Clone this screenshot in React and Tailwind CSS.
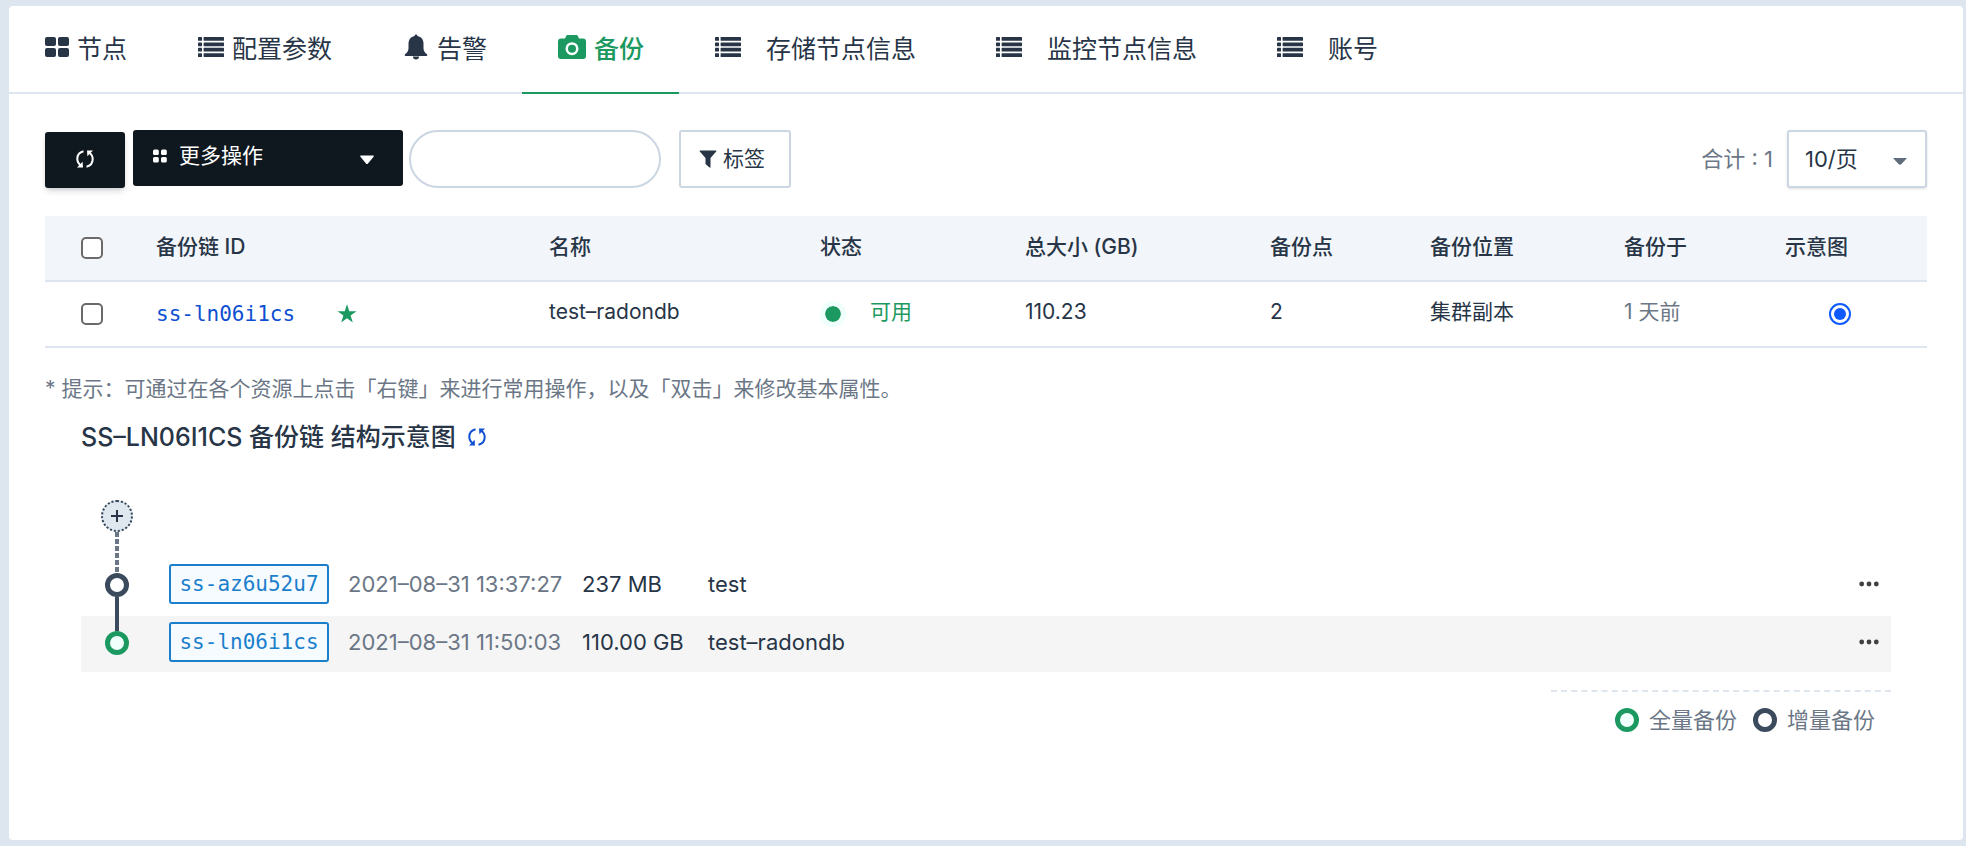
import { useState } from "react";

const GridIcon = () => (
  <svg width="24" height="20" viewBox="0 0 24 20" fill="currentColor" aria-hidden="true">
    <rect x="0" y="0" width="11" height="9" rx="2" />
    <rect x="13" y="0" width="11" height="9" rx="2" />
    <rect x="0" y="11" width="11" height="9" rx="2" />
    <rect x="13" y="11" width="11" height="9" rx="2" />
  </svg>
);

const ListIcon = () => (
  <svg width="26" height="20" viewBox="0 0 26 20" fill="currentColor" aria-hidden="true">
    {[0, 5.4, 10.8, 16.2].map((y) => (
      <g key={y}>
        <rect x="0" y={y} width="4" height="3.8" rx="0.6" />
        <rect x="5.6" y={y} width="20.4" height="3.8" rx="0.6" />
      </g>
    ))}
  </svg>
);

const BellIcon = () => (
  <svg width="26" height="26" viewBox="0 0 26 26" fill="currentColor" aria-hidden="true">
    <path d="M13 .5c.8 0 1.400.6 1.500 1.500 4 .9 6 3.900 6 7.800v4.500c0 2.600 1.300 4.400 3.200 5.800.8.600 1 1.900-.4 1.900H2.700c-1.400 0-1.200-1.300-.4-1.900 1.900-1.400 3.200-3.200 3.200-5.800V9.800c0-3.900 2-6.900 6-7.800.1-.9.7-1.500 1.500-1.500z" />
    <path d="M9.800 22.600h6.400c-.2 1.800-1.500 3-3.200 3s-3-1.200-3.200-3z" />
  </svg>
);

const CameraIcon = () => (
  <svg width="28" height="24" viewBox="0 0 28 24" fill="currentColor" aria-hidden="true">
    <path
      fillRule="evenodd"
      d="M9.800 0h8.400c.8 0 1.500.5 1.800 1.200L21 3.500h4A3 3 0 0 1 28 6.500V21a3 3 0 0 1-3 3H3a3 3 0 0 1-3-3V6.500A3 3 0 0 1 3 3.500h4l1-2.300C8.300.5 9 0 9.800 0zM14 7.200a6.500 6.500 0 1 0 0 13 6.500 6.500 0 0 0 0-13zm0 2.500a4 4 0 1 1 0 8 4 4 0 0 1 0-8z"
    />
  </svg>
);

const RefreshIcon = () => (
  <svg width="18" height="18" viewBox="0 0 18 18" fill="none" aria-hidden="true">
    <path d="M7.500 1.300C3.500 2.200 1.300 5.500 1.300 9c0 2.600 1.300 4.800 3.700 6.500" stroke="currentColor" strokeWidth="2" />
    <path d="M10.500 16.700c4-.9 6.200-4.200 6.200-7.700 0-2.600-1.300-4.800-3.700-6.500" stroke="currentColor" strokeWidth="2" />
    <path d="M1 17.600h6l-.4-5.800z" fill="currentColor" />
    <path d="M17 .4h-6l.4 5.800z" fill="currentColor" />
  </svg>
);

const DotsGridIcon = () => (
  <svg width="14" height="14" viewBox="0 0 14 14" fill="currentColor" aria-hidden="true">
    <rect x="0" y="0.500" width="5.800" height="5.500" rx="1.500" />
    <rect x="8" y="0.500" width="5.800" height="5.500" rx="1.500" />
    <rect x="0" y="8" width="5.800" height="5.500" rx="1.500" />
    <rect x="8" y="8" width="5.800" height="5.500" rx="1.500" />
  </svg>
);

const FilterIcon = () => (
  <svg width="18" height="18" viewBox="0 0 18 18" fill="currentColor" aria-hidden="true">
    <path d="M1.200.5h15.600c.6 0 .8.700.4 1.100L11.500 8v9.200c0 .5-.5.700-.9.400L7 14.500c-.3-.3-.5-.6-.5-1V8L.8 1.600C.4 1.200.600.500 1.200.5z" />
  </svg>
);

const StarIcon = () => (
  <svg width="20" height="20" viewBox="0 0 20 20" fill="currentColor" aria-hidden="true">
    <path d="M10 .3l2.300 7h7.200l-5.900 4.200 2.200 7L10 14.200l-5.800 4.300 2.200-7L.5 7.300h7.200z" />
  </svg>
);

const MoreIcon = () => (
  <svg width="20" height="6" viewBox="0 0 20 6" fill="currentColor" aria-hidden="true">
    <circle cx="2.700" cy="3" r="2.400" />
    <circle cx="10" cy="3" r="2.400" />
    <circle cx="17.300" cy="3" r="2.400" />
  </svg>
);

const PlusIcon = () => (
  <svg width="14" height="14" viewBox="0 0 14 14" stroke="currentColor" strokeWidth="2" aria-hidden="true">
    <path d="M7 1v12M1 7h12" />
  </svg>
);

const tabs = [
  { label: "节点", icon: GridIcon },
  { label: "配置参数", icon: ListIcon },
  { label: "告警", icon: BellIcon },
  { label: "备份", icon: CameraIcon },
  { label: "存储节点信息", icon: ListIcon, wide: true },
  { label: "监控节点信息", icon: ListIcon, wide: true },
  { label: "账号", icon: ListIcon, wide: true },
];

const points = [
  { id: "ss-az6u52u7", time: "2021–08–31 13:37:27", size: "237 MB", name: "test", full: false },
  { id: "ss-ln06i1cs", time: "2021–08–31 11:50:03", size: "110.00 GB", name: "test–radondb", full: true },
];

const Tabs = () => {
  const [active, setActive] = useState("备份");

  return (
    <nav className="flex border-b-2 border-[#dde6ee]">
      {tabs.map(({ label, icon: Icon, wide }) => (
        <button
          key={label}
          type="button"
          onClick={() => setActive(label)}
          className={`-mb-0.5 flex h-22 shrink-0 items-center border-b-2 pl-9 text-[25px] leading-8 ${
            wide ? "gap-[25px] pr-11" : "gap-2 pr-[35px]"
          } ${
            active === label
              ? "border-[#1c9960] font-medium text-[#1c9960]"
              : "border-transparent text-[#273547]"
          }`}
        >
          <span className="mb-1">
            <Icon />
          </span>
          {label}
        </button>
      ))}
    </nav>
  );
};

const Toolbar = () => (
  <div className="flex items-start">
    <button
      type="button"
      aria-label="刷新"
      className="mt-0.5 mr-2 flex h-14 w-20 items-center justify-center rounded-[3px] bg-[#10181f] pb-0.5 text-white shadow-md shadow-slate-900/15"
    >
      <RefreshIcon />
    </button>
    <button
      type="button"
      className="mr-1.5 flex h-14 w-[270px] items-center rounded-[3px] bg-[#10181f] pr-7 pb-1 pl-5 text-white"
    >
      <DotsGridIcon />
      <span className="ml-3">更多操作</span>
      <svg className="mt-2 ml-auto" width="16" height="10" viewBox="0 0 16 10" fill="currentColor" aria-hidden="true">
        <path d="M2 .5h12c.7 0 1 .7.600 1.200L9 8.500c-.6.700-1.400.7-2 0L1.400 1.700C1 1.200 1.300.500 2 .5z" />
      </svg>
    </button>
    <input
      type="text"
      aria-label="搜索"
      className="mr-4.5 h-[58px] w-[252px] rounded-full border-2 border-[#ccd6e2] px-6 outline-none"
    />
    <button
      type="button"
      className="flex h-[58px] w-28 items-center gap-1.5 rounded-[3px] border-2 border-[#ccd6e2] pl-4.5"
    >
      <FilterIcon />
      标签
    </button>
    <div className="ml-auto flex items-center gap-3.5 text-[22px]">
      <label htmlFor="page-size" className="text-[#6b7786]">
        合计 : 1
      </label>
      <div className="relative">
        <select
          id="page-size"
          className="h-[58px] w-[140px] appearance-none rounded-[3px] border-2 border-[#ccd6e2] bg-white pl-4 shadow-sm"
        >
          <option>10/页</option>
        </select>
        <svg
          className="pointer-events-none absolute top-7 right-5"
          width="14"
          height="7"
          viewBox="0 0 14 7"
          fill="#5f6d7c"
          aria-hidden="true"
        >
          <path d="M0 0h14L8.500 6c-.9 1-2.100 1-3 0z" />
        </svg>
      </div>
    </div>
  </div>
);

const boxClass =
  "block size-[22px] appearance-none rounded-[5px] border-2 border-[#6a6a6a] bg-white checked:bg-[#0d5bff]";

const BackupTable = () => (
  <table className="mt-7 w-full table-fixed border-collapse text-left">
    <colgroup>
      <col className="w-[111px]" />
      <col className="w-[393px]" />
      <col className="w-[271px]" />
      <col className="w-[205px]" />
      <col className="w-[245px]" />
      <col className="w-[160px]" />
      <col className="w-[194px]" />
      <col className="w-[161px]" />
      <col className="w-[142px]" />
    </colgroup>
    <thead>
      <tr className="h-[65px] border-b-2 border-[#dde6ee] bg-[#f2f5f9]">
        <th className="pl-9">
          <input type="checkbox" aria-label="全选" className={boxClass} />
        </th>
        {["备份链 ID", "名称", "状态", "总大小 (GB)", "备份点", "备份位置", "备份于", "示意图"].map((title) => (
          <th key={title} className="pb-0.5 font-medium">
            {title}
          </th>
        ))}
      </tr>
    </thead>
    <tbody>
      <tr className="h-[66px] border-b-2 border-[#dde6ee]">
        <td className="pl-9">
          <input type="checkbox" aria-label="ss-ln06i1cs" className={boxClass} />
        </td>
        <td>
          <div className="flex items-center gap-[42px]">
            <a href="#chain" className="font-['DejaVu_Sans_Mono',monospace] text-[#0f4fd1]">
              ss-ln06i1cs
            </a>
            <span className="text-[#1c9960]">
              <StarIcon />
            </span>
          </div>
        </td>
        <td className="pb-1">test–radondb</td>
        <td>
          <div className="flex items-center gap-6 text-[#1c9960]">
            <span className="size-[26px] rounded-full border-5 border-[#effffb] bg-[#1c9960] bg-clip-padding" />
            <span className="pb-1">可用</span>
          </div>
        </td>
        <td className="pb-1">110.23</td>
        <td className="pb-1">2</td>
        <td className="pb-1">集群副本</td>
        <td className="pb-1 text-[#6b7786]">1 天前</td>
        <td className="pl-11">
          <input
            type="radio"
            name="diagram"
            defaultChecked
            aria-label="示意图"
            className="block size-[22px] appearance-none rounded-full border-2 border-[#0d5bff] bg-clip-content p-[3px] checked:bg-[#0d5bff]"
          />
        </td>
      </tr>
    </tbody>
  </table>
);

const Node = ({ full }) => (
  <span
    className={`size-6 shrink-0 rounded-full border-5 ${
      full ? "border-[#1c9960] bg-[#f0fffc]" : "border-[#3b4a5c] bg-white"
    }`}
  />
);

const ChainDiagram = () => (
  <section id="chain" className="mx-9 mt-3.5 text-[22px]">
    <h2 className="flex items-center gap-3 text-[25px] leading-9 font-medium">
      SS–LN06I1CS 备份链 结构示意图
      <button type="button" aria-label="刷新示意图" className="text-[#0f4fd1]">
        <RefreshIcon />
      </button>
    </h2>

    <div className="mt-[45px] flex w-18 flex-col items-center">
      <button
        type="button"
        aria-label="新建备份"
        className="flex size-8 items-center justify-center rounded-full border-2 border-dotted border-[#324558] bg-[#dfe7ef]"
      >
        <PlusIcon />
      </button>
      <span className="h-[26px] w-1 bg-[repeating-linear-gradient(to_top,#6b7786_0_5px,transparent_5px_7px)]" />
    </div>

    <ul>
      {points.map((point) => (
        <li key={point.id} className="flex h-[58px] last:h-14 last:bg-[#f5f5f5]">
          <div className="flex w-18 flex-col items-center">
            <span
              className={`h-[15px] w-1 ${
                point.full
                  ? "bg-[#3b4a5c]"
                  : "bg-[repeating-linear-gradient(to_bottom,transparent_0_2px,#6b7786_2px_7px)]"
              }`}
            />
            <Node full={point.full} />
            {!point.full && <span className="w-1 flex-1 bg-[#3b4a5c]" />}
          </div>
          <div className="flex h-[52px] flex-1 items-center pr-3 pl-4">
            <a
              href="#point"
              className="flex h-10 w-40 items-center justify-center rounded-[3px] border-2 border-[#1b7fcc] bg-[#f6fbff] font-['DejaVu_Sans_Mono',monospace] text-[21px] text-[#1b7fcc]"
            >
              {point.id}
            </a>
            <span className="ml-[19px] w-[234px] text-[#6b7786]">{point.time}</span>
            <span className="w-[126px]">{point.size}</span>
            <span>{point.name}</span>
            <button type="button" aria-label="更多" className="ml-auto text-[#404040]">
              <MoreIcon />
            </button>
          </div>
        </li>
      ))}
    </ul>

    <div className="mt-[18px] ml-auto flex w-[340px] items-center justify-end gap-2.5 border-t-2 border-dashed border-[#dde6ee] pt-3 pr-4 text-[#6b7786]">
      <Node full />
      全量备份
      <span className="ml-1.5">
        <span className="block size-6 rounded-full border-5 border-[#3b4a5c] bg-white" />
      </span>
      增量备份
    </div>
  </section>
);

export default function App() {
  return (
    <div className="flex min-h-screen flex-col bg-[#dde5ee] pt-1.5 pr-[3px] pb-1.5 pl-[9px] font-['Inter','Noto_Sans_CJK_SC',sans-serif] text-[21px] leading-8 text-[#273547]">
      <main className="flex-1 rounded-[4px] bg-white">
        <Tabs />
        <div className="px-9 pt-9">
          <Toolbar />
          <BackupTable />
          <p className="mt-[25px] text-[#6b7786]">
            * 提示：可通过在各个资源上点击「右键」来进行常用操作，以及「双击」来修改基本属性。
          </p>
          <ChainDiagram />
        </div>
      </main>
    </div>
  );
}
